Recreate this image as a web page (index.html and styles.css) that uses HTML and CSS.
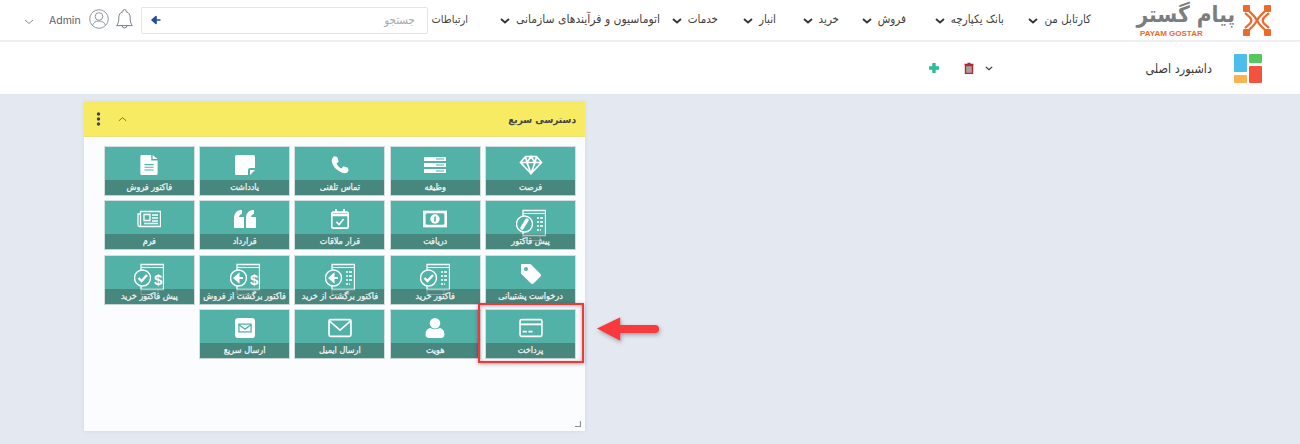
FILE: index.html
```html
<!DOCTYPE html>
<html lang="fa">
<head>
<meta charset="utf-8">
<title>داشبورد اصلی</title>
<link rel="stylesheet" href="styles.css">
</head>
<body>
<svg class="defs" width="0" height="0" aria-hidden="true">
  <defs>
    <symbol id="doc" viewBox="0 0 30 32">
      <path d="M7 1.500h22.500v25H7z" fill="none" stroke="currentColor" stroke-width="1.300"/>
      <path d="M7 4.500h22.500" stroke="currentColor" stroke-width="1.100"/>
      <path d="M7 26.500v5h17v-5" fill="none" stroke="currentColor" stroke-width="1" opacity=".5"/>
    </symbol>
    <symbol id="doc-lines" viewBox="0 0 30 32">
      <use href="#doc"/>
      <path d="M21 9h6M21 13h6M21 17h6M21 21h4" stroke="currentColor" stroke-width="1.300" stroke-dasharray="2 1 5 0"/>
    </symbol>
    <symbol id="badge" viewBox="0 0 30 32">
      <circle cx="8.500" cy="15" r="8" fill="#52b2a8" stroke="currentColor" stroke-width="1.400"/>
    </symbol>
    <symbol id="badge-check" viewBox="0 0 30 32">
      <use href="#badge"/>
      <path d="M4.500 15l3 3 5.500-6" fill="none" stroke="currentColor" stroke-width="2.400"/>
    </symbol>
    <symbol id="badge-back" viewBox="0 0 30 32">
      <use href="#badge"/>
      <path d="M13 15H6M8.500 11.500L4.500 15l4 3.500z" fill="currentColor" stroke="currentColor" stroke-width="2"/>
    </symbol>
    <symbol id="badge-pen" viewBox="0 0 30 32">
      <use href="#badge"/>
      <path d="M6 19l5-8" fill="none" stroke="currentColor" stroke-width="3.400" stroke-linecap="round"/>
    </symbol>
  </defs>
</svg>

<header class="topbar">
  <div class="tools">
    <svg class="admin-chev" viewBox="0 0 10 6"><path d="M1 1l4 3.500L9 1"/></svg>
    <span class="admin">Admin</span>
    <svg class="avatar" viewBox="0 0 20 20"><circle cx="10" cy="10" r="9.300" fill="none" stroke="#8e95a3" stroke-width="1"/><circle cx="10" cy="7.500" r="3.800" fill="none" stroke="#8e95a3" stroke-width="1"/><path d="M3.500 16.500c.8-3 3.300-4.500 6.500-4.500s5.700 1.500 6.500 4.500" fill="none" stroke="#8e95a3" stroke-width="1"/></svg>
    <svg class="bell" viewBox="0 0 18 22"><path d="M9 1.500a1.700 1.700 0 0 1 1.700 1.700v.6c3 .8 4.300 3.300 4.300 6.200 0 4.500.8 6.500 2.200 8.500H.8C2.200 16.500 3 14.500 3 10c0-2.900 1.300-5.400 4.300-6.200v-.6A1.700 1.700 0 0 1 9 1.500zM6.500 18.500a2.500 2.500 0 0 0 5 0" fill="none" stroke="#6d7685" stroke-width="1"/></svg>
    <div class="search">
      <svg class="search-back" viewBox="0 0 10 10"><path d="M9.500 5H3M5 1.500L1 5l4 3.500z" fill="#1d4f9c" stroke="#1d4f9c" stroke-width="1.600" stroke-linejoin="round"/></svg>
      <span class="search-hint">جستجو</span>
    </div>
  </div>
  <nav class="nav">
    <a class="nav-item nav-a">کارتابل من<svg class="chev" viewBox="0 0 10 6"><path d="M1 1l4 3.500L9 1"/></svg></a>
    <a class="nav-item nav-b">بانک یکپارچه<svg class="chev" viewBox="0 0 10 6"><path d="M1 1l4 3.500L9 1"/></svg></a>
    <a class="nav-item nav-c">فروش<svg class="chev" viewBox="0 0 10 6"><path d="M1 1l4 3.500L9 1"/></svg></a>
    <a class="nav-item nav-d">خرید<svg class="chev" viewBox="0 0 10 6"><path d="M1 1l4 3.500L9 1"/></svg></a>
    <a class="nav-item nav-e">انبار<svg class="chev" viewBox="0 0 10 6"><path d="M1 1l4 3.500L9 1"/></svg></a>
    <a class="nav-item nav-f">خدمات<svg class="chev" viewBox="0 0 10 6"><path d="M1 1l4 3.500L9 1"/></svg></a>
    <a class="nav-item nav-g">اتوماسیون و فرآیندهای سازمانی<svg class="chev" viewBox="0 0 10 6"><path d="M1 1l4 3.500L9 1"/></svg></a>
    <a class="nav-item nav-h">ارتباطات</a>
  </nav>
  <div class="logo">
    <div class="logo-words">
      <span class="logo-fa">پیام گستر</span>
      <span class="logo-en">PAYAM GOSTAR</span>
    </div>
    <svg class="logo-mark" viewBox="0 0 28 31">
      <g fill="none" stroke="#ee6a2b" stroke-width="2.300">
        <path d="M4 4l6 6c4 4 4 7 8 11l6 6"/>
        <path d="M24 4l-6 6c-4 4-4 7-8 11l-6 6"/>
        <path d="M2 8l5 4.500q2.500 3 0 6L2 23"/>
        <path d="M26 8l-5 4.500q-2.500 3 0 6L26 23"/>
      </g>
      <g fill="#ee6a2b"><rect x="0" y="0" width="7" height="7" rx="1"/><rect x="21" y="0" width="7" height="7" rx="1"/><rect x="0" y="24" width="7" height="7" rx="1"/><rect x="21" y="24" width="7" height="7" rx="1"/></g>
    </svg>
  </div>
</header>

<section class="subbar">
  <div class="actions">
    <svg class="plus" viewBox="0 0 12 12"><path d="M6 1v10M1 6h10" stroke="#2dbd97" stroke-width="3.400"/></svg>
    <svg class="trash" viewBox="0 0 10 12"><path d="M3.500 1.500h3M.5 2.500h9" stroke="#b1292f" stroke-width="1.400"/><rect x="1.500" y="3.500" width="7" height="8" fill="#a8a0a0" stroke="#b1292f" stroke-width="1.400"/></svg>
    <svg class="sub-chev" viewBox="0 0 10 6"><path d="M1 1l4 3.500L9 1"/></svg>
  </div>
  <div class="dash-title">
    <span class="dash-name">داشبورد اصلی</span>
    <div class="dash-icon">
      <div class="dash-col"><i class="c-blue"></i><i class="c-orange"></i></div>
      <div class="dash-col"><i class="c-green"></i><i class="c-red"></i></div>
    </div>
  </div>
</section>

<main class="stage">
  <section class="panel">
    <div class="panel-head">
      <div class="panel-tools">
        <svg class="dots" viewBox="0 0 4 14"><circle cx="2" cy="2" r="1.700"/><circle cx="2" cy="7" r="1.700"/><circle cx="2" cy="12" r="1.700"/></svg>
        <svg class="up" viewBox="0 0 10 6"><path d="M1 5l4-3.500L9 5"/></svg>
      </div>
      <h2 class="panel-title">دسترسی سریع</h2>
    </div>
    <div class="tiles">
      <a class="tile"><span class="ic"><svg class="i-wide" viewBox="0 0 24 20"><path d="M6.500 1.500h11l5 6L12 18.500 1.500 7.500zM1.500 7.500h21M8 7.500L12 18.500l4-11M6.500 1.500L8 7.500l4-6 4 6 1.500-6" fill="none" stroke="#fff" stroke-width="1.700"/></svg></span><b class="lb">فرصت</b></a>
      <a class="tile"><span class="ic"><svg class="i-md" viewBox="0 0 22 18"><path d="M0 1h22v4H0zM0 7h22v4H0zM0 13h22v4H0z" fill="#fff"/><path d="M12 3h8M12 9h8M12 15h8" stroke="#52b2a8"/></svg></span><b class="lb">وظیفه</b></a>
      <a class="tile"><span class="ic"><svg class="i-md" viewBox="0 0 22 22"><path d="M5 1.500l3 .8 1.500 5-2.300 2c1 2.500 3 4.500 5.500 5.500l2-2.300 5 1.500.8 3c-.5 2-3 3.500-5 3C8.500 18.500 3.500 13.500 2 7.500c-.5-2 1-5.500 3-6z" fill="#fff"/></svg></span><b class="lb">تماس تلفنی</b></a>
      <a class="tile"><span class="ic"><svg class="i-md" viewBox="0 0 20 20"><path d="M1.500 0h17A1.500 1.500 0 0 1 20 1.500V13h-5a2 2 0 0 0-2 2v5H1.500A1.500 1.500 0 0 1 0 18.500v-17A1.500 1.500 0 0 1 1.500 0zM15 15h5l-5 5z" fill="#fff"/></svg></span><b class="lb">یادداشت</b></a>
      <a class="tile"><span class="ic"><svg class="i-md" viewBox="0 0 19 22"><path d="M1.500 0H12v6h7v14.500a1.500 1.500 0 0 1-1.500 1.500h-16A1.500 1.500 0 0 1 0 20.500v-19A1.500 1.500 0 0 1 1.500 0zM13.500 0L19 4.500h-5.500z" fill="#fff"/><path d="M4.500 10.500h10M4.500 13.500h10M4.500 16.500h10" stroke="#52b2a8" stroke-width="1.300"/></svg></span><b class="lb">فاکتور فروش</b></a>

      <a class="tile"><span class="ic"><svg class="i-lg"><use href="#doc-lines"/><use href="#badge-pen"/></svg></span><b class="lb">پیش فاکتور</b></a>
      <a class="tile"><span class="ic"><svg class="i-wide" viewBox="0 0 23 16"><path d="M0 0h23v16H0z" fill="#fff"/><path d="M3.500 2.500h16l1 1v9l-1 1h-16l-1-1v-9z" fill="#52b2a8"/><circle cx="11.500" cy="8" r="4.500" fill="#fff"/><path d="M11.500 5.500v5" stroke="#52b2a8" stroke-width="1.600"/></svg></span><b class="lb">دریافت</b></a>
      <a class="tile"><span class="ic"><svg class="i-md" viewBox="0 0 20 22"><rect x="1" y="3.500" width="18" height="17.500" rx="1.500" fill="none" stroke="#fff" stroke-width="1.800"/><path d="M1 6.500h18" stroke="#fff" stroke-width="3"/><path d="M5.500 0v4M14.500 0v4" stroke="#fff" stroke-width="2"/><path d="M6 14l3 3 5-6" fill="none" stroke="#fff" stroke-width="1.800"/></svg></span><b class="lb">قرار ملاقات</b></a>
      <a class="tile"><span class="ic"><svg class="i-md" viewBox="0 0 22 18"><path d="M0 8c0-4 2-7 6-8h2v4C6 4.500 5 5.500 5 7h5v11H1a1 1 0 0 1-1-1zM12 8c0-4 2-7 6-8h2v4c-2 .5-3 1.500-3 3h5v11h-9a1 1 0 0 1-1-1z" fill="#fff"/></svg></span><b class="lb">قرارداد</b></a>
      <a class="tile"><span class="ic"><svg class="i-wide" viewBox="0 0 24 17"><path d="M3.500 1h20v15H3.500zM3.500 3.500H1V14.500A1.500 1.500 0 0 0 2.500 16h1" fill="none" stroke="#fff" stroke-width="1.300"/><path d="M7 4h6v6H7z" fill="none" stroke="#fff" stroke-width="1.300"/><path d="M15 4.500h6M15 7.500h6M15 10.500h6M7 13h14" stroke="#fff" stroke-width="1.300"/></svg></span><b class="lb">فرم</b></a>

      <a class="tile"><span class="ic"><svg class="i-md" viewBox="0 0 20 20"><path d="M1 0h8.500L19.500 10a2 2 0 0 1 0 2.500l-7 7a2 2 0 0 1-2.500 0L0 9.500V1a1 1 0 0 1 1-1z" fill="#fff"/><circle cx="5" cy="5" r="2" fill="#52b2a8"/></svg></span><b class="lb">درخواست پشتیبانی</b></a>
      <a class="tile"><span class="ic"><svg class="i-lg"><use href="#doc-lines"/><use href="#badge-check"/></svg></span><b class="lb">فاکتور خرید</b></a>
      <a class="tile"><span class="ic"><svg class="i-lg"><use href="#doc-lines"/><use href="#badge-back"/></svg></span><b class="lb">فاکتور برگشت از خرید</b></a>
      <a class="tile"><span class="ic"><svg class="i-lg"><use href="#doc"/><text x="20" y="22" class="dollar">$</text><use href="#badge-back"/></svg></span><b class="lb">فاکتور برگشت از فروش</b></a>
      <a class="tile"><span class="ic"><svg class="i-lg"><use href="#doc"/><text x="20" y="22" class="dollar">$</text><use href="#badge-check"/></svg></span><b class="lb">پیش فاکتور خرید</b></a>

      <a class="tile"><span class="ic"><svg class="i-wide" viewBox="0 0 23 18"><rect x="1" y="1" width="21" height="16" rx="1.500" fill="none" stroke="#fff" stroke-width="1.500"/><path d="M1 5.500h21" stroke="#fff" stroke-width="1.800"/><path d="M3.500 12.500h4M9 12.500h4" stroke="#fff" stroke-width="1.500"/></svg></span><b class="lb">پرداخت</b></a>
      <a class="tile"><span class="ic"><svg class="i-md" viewBox="0 0 18 19"><circle cx="9" cy="5" r="5" fill="#fff"/><path d="M0 16c0-4 2-6 4.500-6.500 3 1.500 6 1.500 9 0C16 10 18 12 18 16c0 2-1.500 3-3 3H3c-1.500 0-3-1-3-3z" fill="#fff"/></svg></span><b class="lb">هویت</b></a>
      <a class="tile"><span class="ic"><svg class="i-wide" viewBox="0 0 23 18"><rect x="1" y="1" width="21" height="16" rx="1.500" fill="none" stroke="#fff" stroke-width="1.600"/><path d="M1.500 2.500L11.500 11l10-8.500" fill="none" stroke="#fff" stroke-width="1.600"/></svg></span><b class="lb">ارسال ایمیل</b></a>
      <a class="tile"><span class="ic"><svg class="i-md" viewBox="0 0 18 18"><rect width="18" height="18" rx="3" fill="#fff"/><path d="M3.500 5.500h11v7h-11z" fill="none" stroke="#52b2a8" stroke-width="1.200"/><path d="M3.500 6L9 10l5.500-4" fill="none" stroke="#52b2a8" stroke-width="1.200"/></svg></span><b class="lb">ارسال سریع</b></a>
    </div>
    <svg class="grip" viewBox="0 0 6 6"><path d="M5.500 0v5.500H0" fill="none" stroke="#8b9094" stroke-width="1.200"/></svg>
    <div class="mark-box"></div>
    <svg class="mark-arrow" viewBox="0 0 66 26"><path d="M1 12.500L25 1v8h36a3.500 3.500 0 0 1 0 8H25v8z" fill="#f8393e"/></svg>
  </section>
</main>
</body>
</html>
```
FILE: styles.css
```css
* { box-sizing: border-box; }
html, body { margin: 0; padding: 0; }
body {
  width: 1300px;
  height: 444px;
  overflow: hidden;
  background: #e4e9f1;
  font-family: "DejaVu Sans Condensed", "DejaVu Sans", sans-serif;
  font-stretch: condensed;
  color: #444;
}
.defs { position: absolute; }
a { color: inherit; text-decoration: none; }

.topbar {
  height: 42px;
  background: #fff;
  border-bottom: 2px solid #eef0f2;
  display: flex;
  align-items: flex-start;
}
.tools {
  display: flex;
  align-items: center;
  height: 40px;
  padding-left: 24px;
  width: 432px;
  flex: none;
}
.admin-chev { width: 10px; height: 6px; margin-top: 3px; flex: none; }
.admin-chev path { fill: none; stroke: #8d8d8d; stroke-width: 1; }
.admin { font-family: "Inter", sans-serif; font-stretch: normal; font-size: 10.500px; color: #606060; margin-left: 15px; width: 32px; flex: none; }
.avatar { width: 20px; height: 20px; margin: 0 0 3px 8px; flex: none; }
.bell { width: 17px; height: 21px; margin: 0 0 3px 7px; flex: none; }
.search {
  width: 287px;
  height: 27px;
  margin-left: 8px;
  flex: none;
  border: 1px solid #e3e5e8;
  border-radius: 2px;
  display: flex;
  justify-content: space-between;
  align-items: center;
  padding: 0 12px 0 9px;
  background: #fff;
}
.search-hint { direction: rtl; font-size: 11.500px; color: #a9a9a9; }
.search-back { width: 10px; height: 10px; }

.nav {
  direction: rtl;
  display: flex;
  align-items: center;
  flex-direction: row;
  justify-content: flex-start;
  width: 659px;
  height: 38px;
  font-size: 11.500px;
  white-space: nowrap;
  color: #3f3f3f;
}
.nav-item { display: flex; align-items: center; gap: 6px; flex: none; }
.nav-a { width: 87px; }
.nav-b { width: 98px; }
.nav-c { width: 67px; }
.nav-d { width: 63px; }
.nav-e { width: 58px; }
.nav-f { width: 58px; }
.nav-g { width: 192px; font-size: 12px; }
.nav-h { width: 36px; font-size: 11px; }
.chev { width: 10px; height: 6px; margin-top: 4px; flex: none; }
.chev path, .sub-chev path { fill: none; stroke: #333; stroke-width: 1.800; }

.logo {
  display: flex;
  gap: 8px;
  align-items: flex-start;
  margin-left: 43px;
  padding-top: 1px;
}
.logo-words { display: flex; flex-direction: column; align-items: stretch; width: 101px; height: 38px; }
.logo-fa { direction: rtl; font-size: 22.500px; font-weight: 700; color: #7b7d7f; line-height: 27px; height: 27px; white-space: nowrap; }
.logo-en { font-family: "Liberation Sans", sans-serif; font-stretch: normal; font-size: 8px; line-height: 8px; font-weight: 700; color: #ee6a2b; margin: 2px 0 0 6px; }
.logo-mark { width: 28px; height: 31px; margin-top: 4px; }

.subbar {
  height: 52px;
  background: #fff;
  display: flex;
  justify-content: space-between;
  align-items: center;
  padding-left: 928px;
  padding-right: 38px;
}
.actions { display: flex; align-items: center; }
.plus { width: 12px; height: 12px; }
.trash { width: 10px; height: 12px; margin-left: 24px; }
.sub-chev { width: 8px; height: 5px; margin-left: 11px; }
.sub-chev path { stroke-width: 1.400; }
.dash-title { display: flex; align-items: center; gap: 22px; }
.dash-name { direction: rtl; font-size: 12.500px; color: #3a3a3a; }
.dash-icon { display: flex; gap: 2px; width: 28px; height: 29px; }
.dash-col { display: flex; flex-direction: column; gap: 3px; width: 13px; }
.dash-col i { display: block; border-radius: 1px; }
.c-blue { background: #4ebdec; height: 18px; }
.c-orange { background: #fab34f; height: 8px; }
.c-green { background: #53c85c; height: 9px; }
.c-red { background: #f2533f; height: 17px; }

.stage { padding: 8px 0 0 84px; }
.panel {
  position: relative;
  width: 501px;
  height: 329px;
  background: #fbfcfe;
  box-shadow: 0 0 4px rgba(120, 130, 150, .18);
}
.panel-head {
  height: 35px;
  background: #f6eb62;
  display: flex;
  justify-content: space-between;
  align-items: center;
  padding: 0 9px 0 12px;
  border-bottom: 1px solid #e9e27c;
}
.panel-tools { display: flex; align-items: center; gap: 17px; }
.dots { width: 5px; height: 14px; fill: #444; }
.up { width: 9px; height: 6px; }
.up path { fill: none; stroke: #666; stroke-width: 1; }
.panel-title { margin: 0; direction: rtl; font-size: 10px; font-weight: 700; color: #444; }

.tiles {
  direction: rtl;
  display: grid;
  grid-template-columns: repeat(5, 91px);
  grid-auto-rows: 50px;
  column-gap: 4.300px;
  row-gap: 4.300px;
  padding: 9px 9px 0 0;
  justify-content: start;
}
.tile {
  display: flex;
  flex-direction: column;
  height: 50px;
  background: #52b2a8;
  border: 1px solid #d3dedd;
  border-bottom-color: #c7d3d2;
  color: #fff;
}
.ic {
  flex: 0 0 33px;
  display: flex;
  justify-content: center;
  align-items: center;
  height: 33px;
}
.i-md { width: 22px; height: 20px; margin-top: 3px; flex: none; }
.i-wide { width: 24px; height: 20px; margin-top: 3px; flex: none; }
.i-lg { width: 30px; height: 32px; margin-top: 14px; flex: none; overflow: visible; position: relative; color: #fff; }
.dollar { direction: ltr; font-family: "Liberation Sans", sans-serif; font-stretch: normal; font-weight: 700; font-size: 15px; fill: #fff; }
.lb {
  position: relative;
  flex: 1;
  background: rgba(45, 35, 31, .3);
  display: flex;
  justify-content: center;
  align-items: center;
  padding-bottom: 1px;
  font-size: 9px;
  font-weight: 400;
  -webkit-text-stroke: .25px #f2f5f5;
  color: #f2f5f5;
  white-space: nowrap;
}
.grip { position: absolute; right: 4px; bottom: 4px; width: 6px; height: 6px; }
.mark-box {
  position: absolute;
  left: 394px;
  top: 201px;
  width: 106px;
  height: 60px;
  border: 2.500px solid #f2363c;
  box-shadow: 0 1px 4px rgba(0, 0, 0, .35), inset 0 1px 4px rgba(0, 0, 0, .3);
}
.mark-arrow {
  position: absolute;
  left: 512px;
  top: 214px;
  width: 64px;
  height: 26px;
  filter: drop-shadow(1px 2px 2px rgba(0, 0, 0, .3));
}
```
